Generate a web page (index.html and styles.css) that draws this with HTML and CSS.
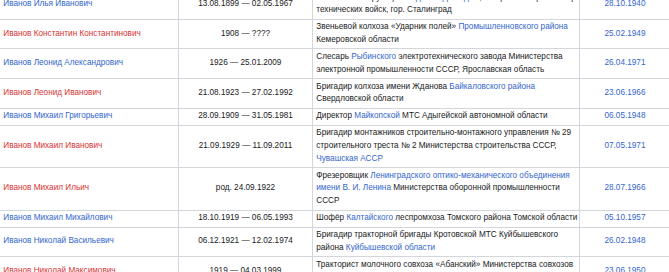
FILE: index.html
```html
<!DOCTYPE html>
<html lang="ru">
<head>
<meta charset="utf-8">
<title>Герои Социалистического Труда</title>
<link rel="stylesheet" href="styles.css">
</head>
<body>
<div class="viewport">
<table class="wikitable">
<tbody>
<tr>
<td class="name"><a class="link" href="#">Иванов Илья Иванович</a></td>
<td class="life">13.08.1899 — 02.05.1967</td>
<td class="desc">Главный конструктор <a class="link" href="#">завода «Баррикады»</a>, генерал-майор инженерно-<br>технических войск, гор. Сталинград</td>
<td class="award"><a class="link" href="#">28.10.1940</a></td>
</tr>
<tr>
<td class="name"><a class="link new" href="#">Иванов Константин Константинович</a></td>
<td class="life">1908 — ????</td>
<td class="desc">Звеньевой колхоза «Ударник полей» <a class="link" href="#">Промышленновского района</a><br>Кемеровской области</td>
<td class="award"><a class="link" href="#">25.02.1949</a></td>
</tr>
<tr>
<td class="name"><a class="link" href="#">Иванов Леонид Александрович</a></td>
<td class="life">1926 — 25.01.2009</td>
<td class="desc">Слесарь <a class="link" href="#">Рыбинского</a> электротехнического завода Министерства<br>электронной промышленности СССР, Ярославская область</td>
<td class="award"><a class="link" href="#">26.04.1971</a></td>
</tr>
<tr>
<td class="name"><a class="link new" href="#">Иванов Леонид Иванович</a></td>
<td class="life">21.08.1923 — 27.02.1992</td>
<td class="desc">Бригадир колхоза имени Жданова <a class="link" href="#">Байкаловского района</a><br>Свердловской области</td>
<td class="award"><a class="link" href="#">23.06.1966</a></td>
</tr>
<tr>
<td class="name"><a class="link" href="#">Иванов Михаил Григорьевич</a></td>
<td class="life">28.09.1909 — 31.05.1981</td>
<td class="desc">Директор <a class="link" href="#">Майкопской</a> МТС Адыгейской автономной области</td>
<td class="award"><a class="link" href="#">06.05.1948</a></td>
</tr>
<tr>
<td class="name"><a class="link new" href="#">Иванов Михаил Иванович</a></td>
<td class="life">21.09.1929 — 11.09.2011</td>
<td class="desc">Бригадир монтажников строительно-монтажного управления № 29<br>строительного треста № 2 Министерства строительства СССР,<br><a class="link" href="#">Чувашская АССР</a></td>
<td class="award"><a class="link" href="#">07.05.1971</a></td>
</tr>
<tr>
<td class="name"><a class="link new" href="#">Иванов Михаил Ильич</a></td>
<td class="life">род. 24.09.1922</td>
<td class="desc">Фрезеровщик <a class="link" href="#">Ленинградского оптико-механического объединения<br>имени В. И. Ленина</a> Министерства оборонной промышленности<br>СССР</td>
<td class="award"><a class="link" href="#">28.07.1966</a></td>
</tr>
<tr>
<td class="name"><a class="link" href="#">Иванов Михаил Михайлович</a></td>
<td class="life">18.10.1919 — 06.05.1993</td>
<td class="desc">Шофёр <a class="link" href="#">Калтайского</a> леспромхоза Томского района Томской области</td>
<td class="award"><a class="link" href="#">05.10.1957</a></td>
</tr>
<tr>
<td class="name"><a class="link" href="#">Иванов Николай Васильевич</a></td>
<td class="life">06.12.1921 — 12.02.1974</td>
<td class="desc">Бригадир тракторной бригады Кротовской МТС Куйбышевского<br>района <a class="link" href="#">Куйбышевской области</a></td>
<td class="award"><a class="link" href="#">26.02.1948</a></td>
</tr>
<tr>
<td class="name"><a class="link new" href="#">Иванов Николай Максимович</a></td>
<td class="life">1919 — 04.03.1999</td>
<td class="desc">Тракторист молочного совхоза «Абанский» Министерства совхозов<br>СССР, Абанский район Красноярского края</td>
<td class="award"><a class="link" href="#">23.06.1950</a></td>
</tr>
</tbody>
</table>
</div>
</body>
</html>
```
FILE: styles.css
```css
html, body {
  margin: 0;
  padding: 0;
  background: #ffffff;
}

.viewport {
  width: 669px;
  height: 272px;
  overflow: hidden;
}

.wikitable {
  margin-top: -11px;
  margin-left: -1px;
  border-collapse: collapse;
  table-layout: fixed;
  width: 671px;
  font-family: "Liberation Sans", Arial, sans-serif;
  font-size: 8.2px;
  line-height: 12.75px;
  color: #202122;
  background: #ffffff;
}

.wikitable td {
  border: 1px solid #d3d6da;
  padding: 1.6px 3.3px;
  vertical-align: middle;
  white-space: nowrap;
}

/* content widths: column pitch minus padding and border */
.wikitable td.name { width: 171.4px; }
.wikitable td.life { width: 126.4px; text-align: center; }
.wikitable td.desc { width: 259.4px; }
.wikitable td.award { width: 83.4px; text-align: center; }

.link {
  color: #3366cc;
  text-decoration: none;
}

.link.new {
  color: #d73333;
}
```
